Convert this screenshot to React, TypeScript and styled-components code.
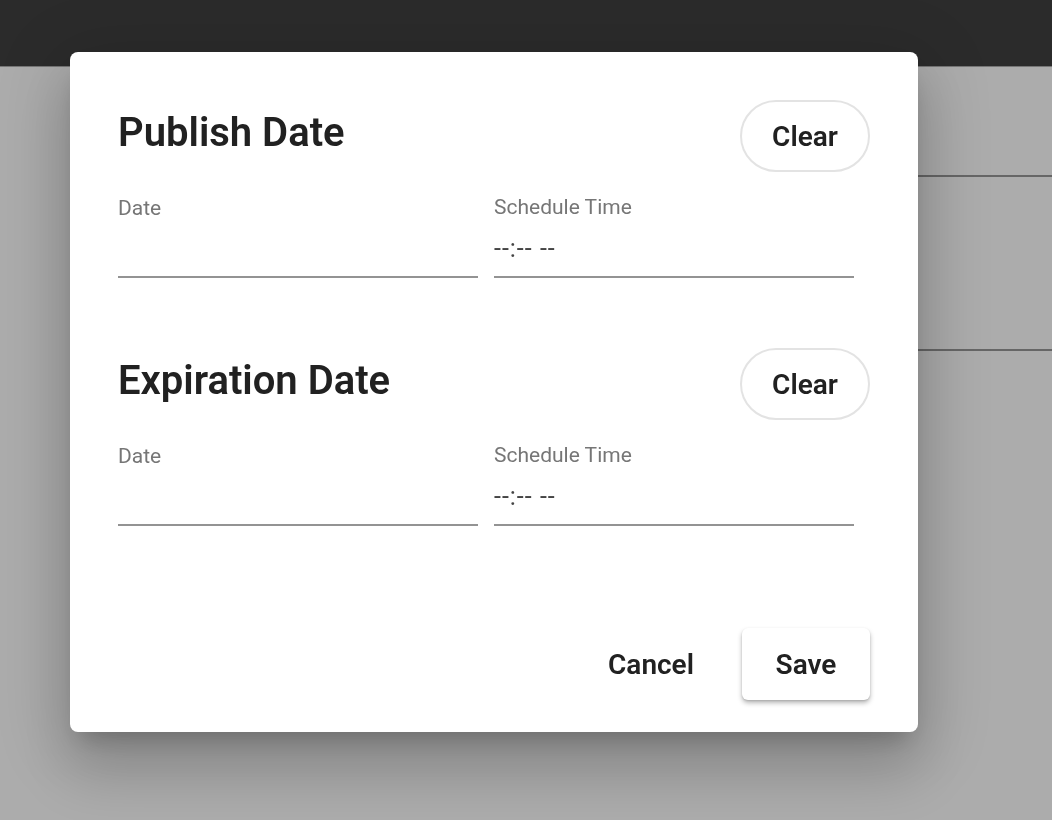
import styled, { createGlobalStyle } from "styled-components";

const GlobalStyle = createGlobalStyle`
  html, body {
    margin: 0;
    padding: 0;
    background: #acacac;
    font-family: Roboto, "Liberation Sans", Arial, sans-serif;
  }
  * { box-sizing: border-box; }
`;

const Page = styled.div`
  width: 100vw;
  height: 100vh;
  overflow: hidden;
  display: flex;
  flex-direction: column;
`;

const TopBar = styled.header`
  height: 67px;
  flex-shrink: 0;
  background: #2b2b2b;
  border-bottom: 1px solid #767676;
`;

const Content = styled.main`
  display: flex;
  flex-direction: column;
  padding-left: 300px;
  padding-top: 108px;
`;

const ListRow = styled.div<{ $height: number }>`
  height: ${(p) => p.$height}px;
  border-top: 2px solid #666666;
`;

const Backdrop = styled.div`
  position: fixed;
  inset: 0;
  display: flex;
  align-items: flex-start;
  padding: 52px 0 0 70px;
`;

const Dialog = styled.section`
  width: 848px;
  height: 680px;
  background: #ffffff;
  border-radius: 8px;
  padding: 48px 48px 32px;
  display: flex;
  flex-direction: column;
  box-shadow:
    0 16px 22px -10px rgba(0, 0, 0, 0.2),
    0 36px 57px 5px rgba(0, 0, 0, 0.14),
    0 14px 69px 12px rgba(0, 0, 0, 0.12);
`;

const Section = styled.div`
  display: flex;
  flex-direction: column;
  height: 248px;
`;

const SectionHeader = styled.div`
  display: flex;
  align-items: center;
  justify-content: space-between;
  height: 72px;
`;

const Title = styled.h2`
  margin: 0;
  margin-top: -8px;
  font-size: 40px;
  font-weight: 600;
  color: #212121;
  letter-spacing: 0;
`;

const PillButton = styled.button`
  width: 130px;
  height: 72px;
  border: 2px solid #e3e3e3;
  border-radius: 36px;
  background: #ffffff;
  font-family: inherit;
  font-size: 28px;
  font-weight: 600;
  color: #212121;
  cursor: pointer;
`;

const FieldRow = styled.div`
  display: grid;
  grid-template-columns: 360px 360px;
  gap: 16px;
  margin-top: 22px;
`;

const Field = styled.label<{ $lift?: number }>`
  display: flex;
  flex-direction: column;
  height: 84px;
  border-bottom: 2px solid #939393;
  padding-top: ${(p) => 1 - (p.$lift ?? 0)}px;
`;

const FieldLabel = styled.span`
  font-size: 21px;
  color: #767676;
  line-height: 26px;
`;

const FieldValue = styled.span`
  margin-top: 13px;
  font-size: 25px;
  color: #444444;
  line-height: 32px;
  letter-spacing: 1px;
`;

const Footer = styled.div`
  margin-top: auto;
  display: flex;
  justify-content: flex-end;
  gap: 27px;
`;

const TextButton = styled.button`
  width: 128px;
  height: 72px;
  border: none;
  background: transparent;
  font-family: inherit;
  font-size: 28px;
  font-weight: 600;
  color: #212121;
  cursor: pointer;
`;

const RaisedButton = styled(TextButton)`
  background: #ffffff;
  border-radius: 6px;
  box-shadow: 0 3px 5px rgba(0, 0, 0, 0.28), 0 1px 2px rgba(0, 0, 0, 0.12);
`;

const sections = ["Publish Date", "Expiration Date"];

function DateSection({ title }: { title: string }) {
  return (
    <Section>
      <SectionHeader>
        <Title>{title}</Title>
        <PillButton>Clear</PillButton>
      </SectionHeader>
      <FieldRow>
        <Field>
          <FieldLabel>Date</FieldLabel>
        </Field>
        <Field $lift={2}>
          <FieldLabel>Schedule Time</FieldLabel>
          <FieldValue>--:-- --</FieldValue>
        </Field>
      </FieldRow>
    </Section>
  );
}

export default function App() {
  return (
    <>
      <GlobalStyle />
      <Page>
        <TopBar />
        <Content>
          <ListRow $height={174} />
          <ListRow $height={174} />
        </Content>
      </Page>
      <Backdrop>
        <Dialog>
          {sections.map((s) => (
            <DateSection key={s} title={s} />
          ))}
          <Footer>
            <TextButton>Cancel</TextButton>
            <RaisedButton>Save</RaisedButton>
          </Footer>
        </Dialog>
      </Backdrop>
    </>
  );
}
